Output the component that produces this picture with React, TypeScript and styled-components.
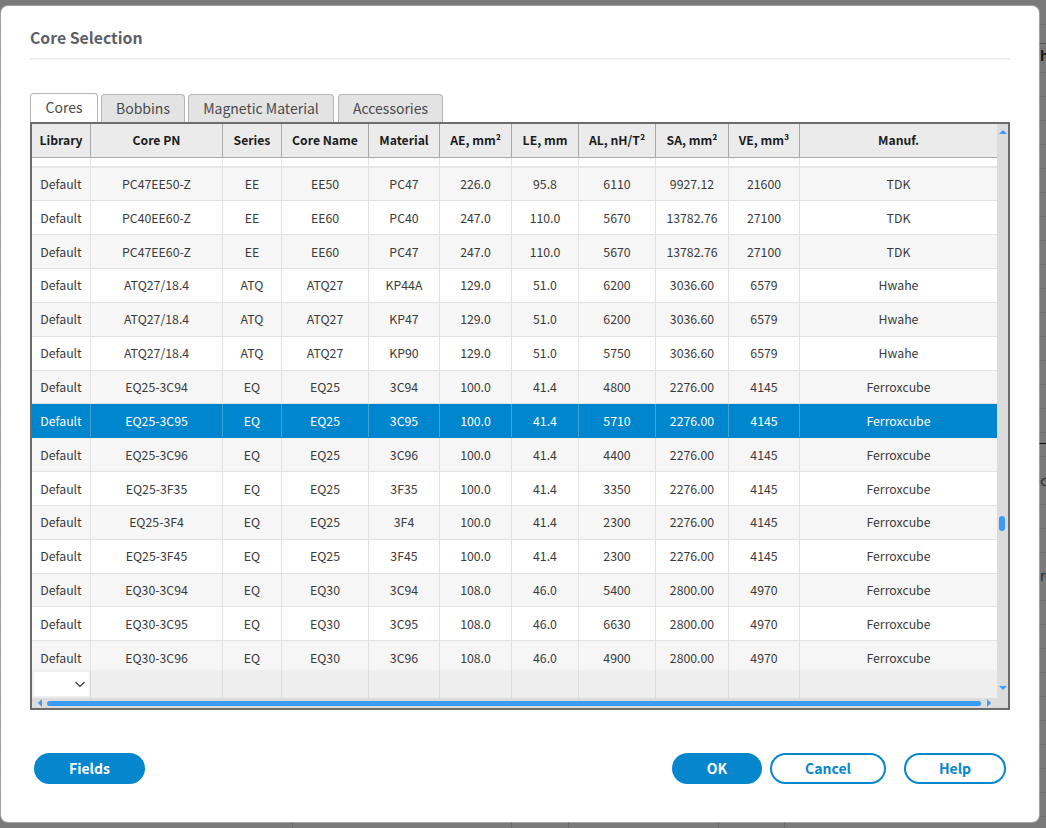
import React from 'react';
import styled, { createGlobalStyle } from 'styled-components';

const GlobalStyle = createGlobalStyle`
  html, body {
    margin: 0;
    padding: 0;
    height: 100%;
    background: #7a7a7a;
    font-family: "Noto Sans CJK SC", "Noto Sans", "Liberation Sans", sans-serif;
  }
`;

const COLUMNS = '59px 132px 59px 87px 71px 72px 67px 77px 73px 71px 197px';

const Page = styled.div`
  position: relative;
  width: 1046px;
  height: 828px;
  box-sizing: border-box;
  padding: 6px 7px 6px 1px;
  overflow: hidden;
  background-color: #7a7a7a;
  background-image: repeating-linear-gradient(
    to bottom,
    transparent 0,
    transparent 23px,
    #6f6f6f 23px,
    #6f6f6f 24px
  );
  background-position: 0 1px;
`;

/* bits of the page behind the dialog that show in the right margin */
const BackdropText = styled.span<{ $top: number; $left: number; $bold?: boolean }>`
  position: absolute;
  top: ${p => p.$top}px;
  left: ${p => p.$left}px;
  font-size: 14px;
  line-height: 18px;
  font-weight: ${p => (p.$bold ? 700 : 400)};
  color: ${p => (p.$bold ? '#161616' : '#2e2e2e')};
`;

const BackdropRule = styled.div<{ $top: number; $color: string }>`
  position: absolute;
  top: ${p => p.$top}px;
  left: 1036px;
  right: 0;
  height: 1px;
  background: ${p => p.$color};
`;

const BackdropColumnLine = styled.div<{ $left: number }>`
  position: absolute;
  left: ${p => p.$left}px;
  bottom: 0;
  width: 1px;
  height: 6px;
  background: #6a6a6a;
`;

const Modal = styled.div`
  position: relative;
  height: 100%;
  box-sizing: border-box;
  background: #fff;
  border-radius: 7px;
  box-shadow: 0 0 0 1px rgba(255, 255, 255, 0.3);
  padding: 19px 29px 0;
  display: flex;
  flex-direction: column;
`;

const Title = styled.h1`
  margin: 0;
  height: 35px;
  line-height: 26px;
  font-size: 15.8px;
  font-weight: 700;
  color: #5c6066;
  border-bottom: 2px solid #eeeeee;
  box-sizing: border-box;
`;

const Tabs = styled.div`
  margin-top: 33px;
  height: 29px;
  display: flex;
  align-items: flex-end;
`;

const Tab = styled.div<{ $active?: boolean; $width: number; $gap: number }>`
  width: ${p => p.$width}px;
  margin-right: ${p => p.$gap}px;
  height: ${p => (p.$active ? 29 : 28)}px;
  box-sizing: border-box;
  border: 1px solid #b4b4b4;
  border-bottom: none;
  border-radius: 4px 4px 0 0;
  background: ${p => (p.$active ? '#fff' : '#e3e3e3')};
  color: #4a4a4a;
  font-size: 14px;
  line-height: ${p => (p.$active ? 27 : 26)}px;
  text-align: center;
`;

const TableFrame = styled.div`
  width: 980px;
  height: 588px;
  box-sizing: border-box;
  border: 2px solid #6c6c6c;
  display: grid;
  grid-template-columns: 965px 11px;
  grid-template-rows: 1fr 10px;
`;

const TableBody = styled.div`
  display: flex;
  flex-direction: column;
  min-height: 0;
`;

const HeaderRow = styled.div`
  height: 34px;
  flex: none;
  display: grid;
  grid-template-columns: ${COLUMNS};
  background: #ebebeb;
  border-bottom: 1px solid #a8a8a8;
  box-sizing: border-box;
`;

const HeaderCell = styled.div`
  border-right: 1px solid #a8a8a8;
  display: flex;
  align-items: center;
  justify-content: center;
  padding-bottom: 2px;
  font-size: 12.2px;
  font-weight: 700;
  color: #1c1c1c;
  white-space: nowrap;
  &:last-child {
    border-right: none;
  }
`;

const RowsViewport = styled.div`
  flex: 1;
  min-height: 0;
  overflow: hidden;
  background: #fff;
`;

const Spacer = styled.div`
  height: 9.5px;
  box-sizing: border-box;
  display: grid;
  grid-template-columns: ${COLUMNS};
  border-bottom: 2px solid #e6e6e6;
`;

const Row = styled.div<{ $odd: boolean; $selected: boolean }>`
  height: 33.857px;
  box-sizing: border-box;
  display: grid;
  grid-template-columns: ${COLUMNS};
  background: ${p => (p.$selected ? '#0086cd' : p.$odd ? '#f6f6f6' : '#fff')};
  color: ${p => (p.$selected ? '#fff' : '#3a3a3a')};
  border-bottom: 1px solid ${p => (p.$selected ? '#0086cd' : '#e2e2e2')};
`;

const Cell = styled.div<{ $selected?: boolean }>`
  border-right: 1px solid ${p => (p.$selected ? '#3fa3d9' : '#e2e2e2')};
  display: flex;
  align-items: center;
  justify-content: center;
  font-size: 12.3px;
  white-space: nowrap;
  &:last-child {
    border-right: none;
  }
`;

const FooterRow = styled.div`
  height: 28px;
  flex: none;
  display: grid;
  grid-template-columns: ${COLUMNS};
  background: #eeeeee;
`;

const FooterCell = styled.div`
  border-right: 1px solid #dcdcdc;
  display: flex;
  align-items: center;
  &:last-child {
    border-right: none;
  }
`;

const FilterSelect = styled.div`
  width: 55px;
  height: 24px;
  margin-left: 2px;
  background: #fff;
  display: flex;
  align-items: center;
  justify-content: flex-end;
  padding-right: 3px;
  box-sizing: border-box;
`;

const VScroll = styled.div`
  position: relative;
  background: #dcdcdc;
  display: flex;
  flex-direction: column;
  justify-content: space-between;
  align-items: center;
  padding: 5px 0 7px;
  box-sizing: border-box;
`;

const VThumb = styled.div`
  position: absolute;
  left: 2px;
  top: 392px;
  width: 6px;
  height: 15px;
  border-radius: 3px;
  background: #3a9bfb;
`;

const HScroll = styled.div`
  grid-column: 1 / span 2;
  background: #dcdcdc;
  display: flex;
  align-items: center;
  padding: 0 16px 0 5px;
  box-sizing: border-box;
`;

const HThumb = styled.div`
  margin: 0 5px 0 4px;
  flex: 1;
  height: 5px;
  border-radius: 3px;
  background: #3a9bfb;
`;

const Footer = styled.div`
  margin-top: 43px;
  padding: 0 4px;
  display: flex;
  align-items: center;
`;

const PillButton = styled.button<{ $primary?: boolean; $width: number; $gap?: number }>`
  width: ${p => p.$width}px;
  height: 31px;
  margin-right: ${p => p.$gap ?? 0}px;
  box-sizing: border-box;
  border: 2px solid #0686cd;
  border-radius: 16px;
  background: ${p => (p.$primary ? '#0686cd' : '#fff')};
  color: ${p => (p.$primary ? '#fff' : '#0686cd')};
  font-family: inherit;
  font-size: 14px;
  font-weight: 700;
  padding: 0 0 2px;
`;

const FooterGap = styled.div`
  flex: 1;
`;

const Triangle: React.FC<{ dir: 'up' | 'down' | 'left' | 'right' }> = ({ dir }) => {
  const points = {
    up: '0,5 4,1 8,5',
    down: '0,1 8,1 4,5',
    left: '5,0 5,8 1,4',
    right: '1,0 1,8 5,4',
  }[dir];
  return (
    <svg width={dir === 'up' || dir === 'down' ? 8 : 6} height={dir === 'up' || dir === 'down' ? 6 : 8}>
      <polygon points={points} fill="#3a9bfb" />
    </svg>
  );
};

const headers: React.ReactNode[] = [
  'Library', 'Core PN', 'Series', 'Core Name', 'Material',
  <>AE, mm²</>, 'LE, mm', <>AL, nH/T²</>, <>SA, mm²</>, <>VE, mm³</>, 'Manuf.',
];

const rows: string[][] = [
  ['Default', 'PC47EE50-Z', 'EE', 'EE50', 'PC47', '226.0', '95.8', '6110', '9927.12', '21600', 'TDK'],
  ['Default', 'PC40EE60-Z', 'EE', 'EE60', 'PC40', '247.0', '110.0', '5670', '13782.76', '27100', 'TDK'],
  ['Default', 'PC47EE60-Z', 'EE', 'EE60', 'PC47', '247.0', '110.0', '5670', '13782.76', '27100', 'TDK'],
  ['Default', 'ATQ27/18.4', 'ATQ', 'ATQ27', 'KP44A', '129.0', '51.0', '6200', '3036.60', '6579', 'Hwahe'],
  ['Default', 'ATQ27/18.4', 'ATQ', 'ATQ27', 'KP47', '129.0', '51.0', '6200', '3036.60', '6579', 'Hwahe'],
  ['Default', 'ATQ27/18.4', 'ATQ', 'ATQ27', 'KP90', '129.0', '51.0', '5750', '3036.60', '6579', 'Hwahe'],
  ['Default', 'EQ25-3C94', 'EQ', 'EQ25', '3C94', '100.0', '41.4', '4800', '2276.00', '4145', 'Ferroxcube'],
  ['Default', 'EQ25-3C95', 'EQ', 'EQ25', '3C95', '100.0', '41.4', '5710', '2276.00', '4145', 'Ferroxcube'],
  ['Default', 'EQ25-3C96', 'EQ', 'EQ25', '3C96', '100.0', '41.4', '4400', '2276.00', '4145', 'Ferroxcube'],
  ['Default', 'EQ25-3F35', 'EQ', 'EQ25', '3F35', '100.0', '41.4', '3350', '2276.00', '4145', 'Ferroxcube'],
  ['Default', 'EQ25-3F4', 'EQ', 'EQ25', '3F4', '100.0', '41.4', '2300', '2276.00', '4145', 'Ferroxcube'],
  ['Default', 'EQ25-3F45', 'EQ', 'EQ25', '3F45', '100.0', '41.4', '2300', '2276.00', '4145', 'Ferroxcube'],
  ['Default', 'EQ30-3C94', 'EQ', 'EQ30', '3C94', '108.0', '46.0', '5400', '2800.00', '4970', 'Ferroxcube'],
  ['Default', 'EQ30-3C95', 'EQ', 'EQ30', '3C95', '108.0', '46.0', '6630', '2800.00', '4970', 'Ferroxcube'],
  ['Default', 'EQ30-3C96', 'EQ', 'EQ30', '3C96', '108.0', '46.0', '4900', '2800.00', '4970', 'Ferroxcube'],
];

const SELECTED = 7;

const App: React.FC = () => (
  <>
    <GlobalStyle />
    <Page>
      <BackdropRule $top={43} $color="#555" />
      <BackdropRule $top={443} $color="#111" />
      <BackdropText $top={46} $left={1040} $bold>h</BackdropText>
      <BackdropText $top={471} $left={1031}>tic</BackdropText>
      <BackdropText $top={566} $left={1040}>re</BackdropText>
      {[292, 511, 568, 718, 784].map(x => (
        <BackdropColumnLine key={x} $left={x} />
      ))}
      <Modal>
        <Title>Core Selection</Title>
        <Tabs>
          <Tab $active $width={68} $gap={3}>Cores</Tab>
          <Tab $width={84} $gap={3}>Bobbins</Tab>
          <Tab $width={146} $gap={4}>Magnetic Material</Tab>
          <Tab $width={105} $gap={0}>Accessories</Tab>
        </Tabs>
        <TableFrame>
          <TableBody>
            <HeaderRow>
              {headers.map((h, i) => (
                <HeaderCell key={i}>{h}</HeaderCell>
              ))}
            </HeaderRow>
            <RowsViewport>
              <Spacer>
                {headers.map((_, i) => (
                  <Cell key={i} />
                ))}
              </Spacer>
              {rows.map((r, i) => (
                <Row key={i} $odd={i % 2 === 0} $selected={i === SELECTED}>
                  {r.map((c, j) => (
                    <Cell key={j} $selected={i === SELECTED}>{c}</Cell>
                  ))}
                </Row>
              ))}
            </RowsViewport>
            <FooterRow>
              {headers.map((_, i) => (
                <FooterCell key={i}>
                  {i === 0 && (
                    <FilterSelect>
                      <svg width="12" height="12" viewBox="0 0 12 12" fill="none" stroke="#333" strokeWidth="1.2">
                        <path d="M1.5 4 L6 8.5 L10.5 4" />
                      </svg>
                    </FilterSelect>
                  )}
                </FooterCell>
              ))}
            </FooterRow>
          </TableBody>
          <VScroll>
            <Triangle dir="up" />
            <VThumb />
            <Triangle dir="down" />
          </VScroll>
          <HScroll>
            <Triangle dir="left" />
            <HThumb />
            <Triangle dir="right" />
          </HScroll>
        </TableFrame>
        <Footer>
          <PillButton $primary $width={111}>Fields</PillButton>
          <FooterGap />
          <PillButton $primary $width={90} $gap={8}>OK</PillButton>
          <PillButton $width={116} $gap={18}>Cancel</PillButton>
          <PillButton $width={102}>Help</PillButton>
        </Footer>
      </Modal>
    </Page>
  </>
);

export default App;
